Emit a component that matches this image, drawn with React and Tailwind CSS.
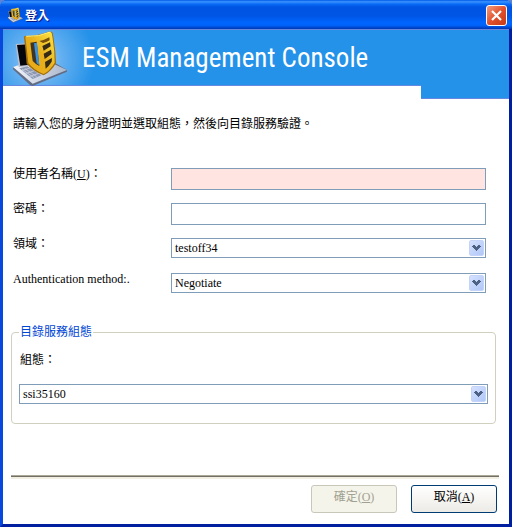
const narrow = 'font-["Liberation_Sans_Narrow","Arial_Narrow","Roboto_Condensed","Liberation_Sans",sans-serif]';

function Shield({ className }) {
  return (
    <svg viewBox="30 88 174 168" className={className} aria-hidden="true">
      <defs>
        <linearGradient id="gold" x1="0" y1="1" x2="1" y2="0">
          <stop offset="0" stopColor="#e9a817" />
          <stop offset="0.5" stopColor="#e8b01c" />
          <stop offset="1" stopColor="#ffe94a" />
        </linearGradient>
        <linearGradient id="base" x1="0" y1="0" x2="1" y2="0">
          <stop offset="0" stopColor="#f2f4fa" />
          <stop offset="1" stopColor="#a9b6cc" />
        </linearGradient>
      </defs>
      <path d="M39 200 63 192 150 178 201 208 201 213 98 256 90 253 39 206Z" fill="#626d85" />
      <path d="M39 199 63 191 160 189 201 208 98 249Z" fill="url(#base)" />
      <path d="M58 203 82 197 124 224 98 235Z" fill="#8c97b2" />
      <path d="M66 206 102 231M74 203 110 228M64 210 90 202M76 219 104 210M88 228 116 218" stroke="#d5dbe8" strokeWidth="2" />
      <path d="M47 130 102 126 108 194 56 199Z" fill="#b5bfd0" />
      <path d="M51 133 100 130 106 190 61 195Z" fill="#05070c" />
      <path d="M72 110Q72 104 79 106Q114 106 151 92L158 96L161 114Q167 150 168 187Q154 213 131 224Q98 211 80 189Q77 150 72 110Z" fill="#a06f0c" />
      <path d="M76 110Q76 105 81 107Q116 108 150 93L155 97L158 114Q164 150 164 186Q150 210 131 220Q102 209 85 187Q81 150 76 110Z" fill="url(#gold)" />
      <path d="M91 126 110 123 118 196Q106 190 98 181Z" fill="#3f3524" />
      <path d="M102 128 111 126 118 194 110 188Z" fill="#3b93df" />
      <path d="M118 121Q134 118 148 110L149 119Q138 125 129 127Z" fill="#76500c" />
      <path d="M127 136 150 125 152 137 131 150ZM131 159 153 147 155 160 134 175ZM135 184 156 172 155 183Q147 196 137 204Z" fill="#352b16" />
      <path d="M79 107Q116 109 151 94" fill="none" stroke="#fff07a" strokeWidth="3" />
    </svg>
  );
}

function Combo({ id, value }) {
  return (
    <div className="relative">
      <select
        id={id}
        className="block h-5 w-full appearance-none border border-[#7f9db9] bg-white pl-[3px] pr-5 text-[12px] leading-4 text-black outline-none"
      >
        <option>{value}</option>
      </select>
      <span className="pointer-events-none absolute right-[2px] top-[2px] flex h-4 w-[15px] items-center justify-center rounded-[2px] border border-[#c4d3fa] bg-linear-to-br from-[#d5e1fe] to-[#b0c7f7]">
        <svg viewBox="0 0 9 6" className="h-[6px] w-[9px]" aria-hidden="true" shapeRendering="crispEdges">
          <path d="M0 1h1V0h2v1h1v1h1V1h1V0h2v1h1v1H8v1H7v1H6v1H5v1H4V5H3V4H2V3H1V2H0Z" fill="#4d6185" />
        </svg>
      </span>
    </div>
  );
}

function Row({ id, label, children }) {
  return (
    <div className="grid h-[35px] grid-cols-[158px_1fr] items-start">
      <label htmlFor={id} className="leading-3">{label}</label>
      {children}
    </div>
  );
}

export default function App() {
  return (
    <div className="bg-[#5b84d8]">
      <main className='overflow-hidden rounded-t-[7px] bg-[#0855dd] font-["Liberation_Serif","Noto_Sans_CJK_TC",serif] text-[12px] text-black'>
        <header className="flex h-[29px] items-center justify-between bg-[linear-gradient(180deg,#0058e6_0%,#3a93ff_6%,#0a6bf5_14%,#0054e3_24%,#0055e5_55%,#0066ff_78%,#0061f8_88%,#0040c4_97%,#0038b0_100%)] pl-[7px] pr-[5px]">
          <div className="flex items-center gap-[2px]">
            <Shield className="size-4" />
            <h1 className='font-["Noto_Sans_CJK_TC",sans-serif] text-[12px] font-bold leading-4 text-white [text-shadow:1px_1px_#0a1883]'>登入</h1>
          </div>
          <button type="button" aria-label="關閉" className="mt-[2px] flex size-[21px] items-center justify-center rounded-[3px] border border-white bg-linear-to-br from-[#f09a7c] via-[#e2512c] to-[#c83a12]">
            <svg viewBox="0 0 11 11" className="size-[11px]" aria-hidden="true">
              <path d="M1 1 10 10M10 1 1 10" stroke="white" strokeWidth="2.2" />
            </svg>
          </button>
        </header>

        <div className="border-x-[3px] border-b-[3px] border-b-[#001ea0] border-l-[#0848dd] border-r-[#001ea0] bg-white">
          <div className="flex h-[57px] items-center border-y border-[#6688df] bg-[#2592e9] bg-[radial-gradient(circle_at_35px_30px,#a5d0f5_0px,#63aff0_24px,#2592e9_56px)] pl-[7px]">
            <Shield className="h-14 w-[58px]" />
            <h2 className={`ml-[14px] whitespace-nowrap text-[27px] leading-9 text-white ${narrow}`}>ESM Management Console</h2>
          </div>
          <div className="flex justify-end">
            <div className="-mt-px h-[14px] w-[88px] border-b border-[#6688df] bg-[#2592e9]" />
          </div>

          <form onSubmit={(e) => e.preventDefault()} className="pb-[11px] pt-[19px]">
            <div className="pl-[10px] pr-[23px]">
              <p className="mb-[38px] leading-3">請輸入您的身分證明並選取組態，然後向目錄服務驗證。</p>
              <Row id="user" label={<>使用者名稱(<u>U</u>)：</>}>
                <input id="user" type="text" className="h-[22px] w-full border border-[#7f9db9] bg-[#ffe4e1] px-1 outline-none" />
              </Row>
              <Row id="password" label="密碼：">
                <input id="password" type="password" className="h-[22px] w-full border border-[#7f9db9] bg-white px-1 outline-none" />
              </Row>
              <Row id="domain" label="領域：">
                <Combo id="domain" value="testoff34" />
              </Row>
              <Row id="method" label="Authentication method:.">
                <Combo id="method" value="Negotiate" />
              </Row>
            </div>

            <fieldset className="ml-2 mr-[13px] mt-[18px] rounded-[4px] border border-[#d0d0bf] px-[7px] pb-[19px]">
              <legend className="px-px leading-3 text-[#0046d5]">目錄服務組態</legend>
              <label htmlFor="config" className="mb-[18px] ml-px mt-4 block leading-3">組態：</label>
              <Combo id="config" value="ssi35160" />
            </fieldset>

            <hr className="ml-2 mr-[10px] mt-[51px] h-1 border-0 border-b-2 border-t border-b-[#f1efe2] border-t-[#aca899] bg-[#716f64]" />

            <div className="mr-3 mt-[6px] flex justify-end gap-[14px]">
              <button type="submit" disabled className="h-7 w-[86px] rounded-[3px] border border-[#c9c7ba] bg-[#f5f4ea] pb-1 leading-4 text-[#a1a192]">
                確定(<u>O</u>)
              </button>
              <button type="button" className="h-7 w-[86px] rounded-[3px] border border-[#003c74] bg-linear-to-b from-white to-[#ecebe6] pb-1 leading-4">
                取消(<u>A</u>)
              </button>
            </div>
          </form>
        </div>
      </main>
    </div>
  );
}
